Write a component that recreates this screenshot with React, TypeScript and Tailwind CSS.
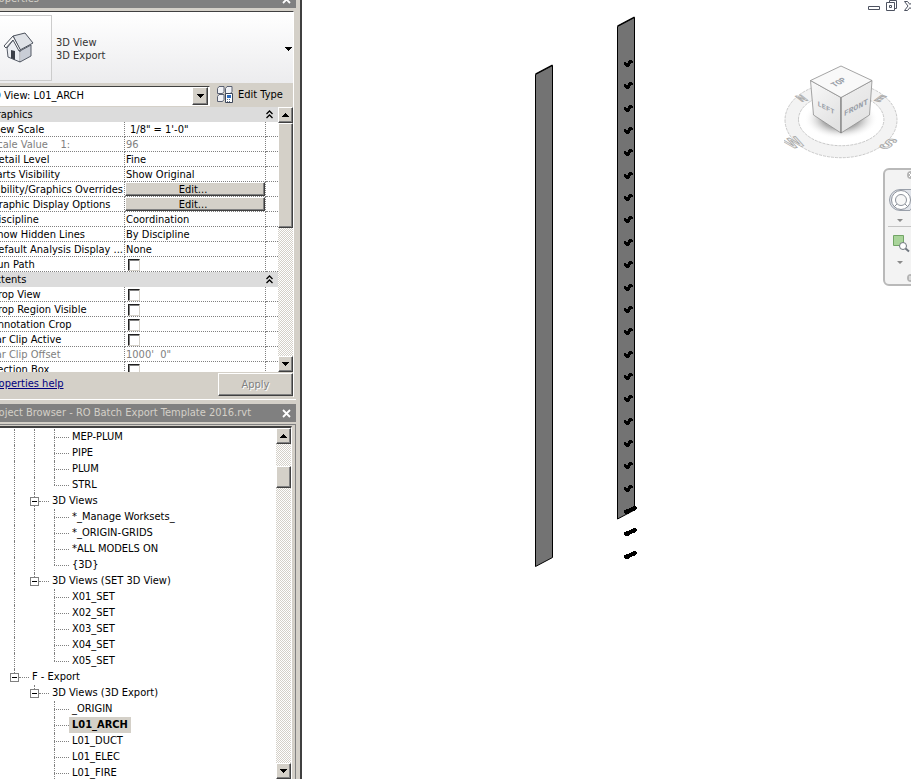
import { useState } from "react";
import type { ReactNode } from "react";

interface PropertyRow {
  name: string;
  kind: "text" | "button" | "check";
  value?: string;
  disabled?: boolean;
  indent?: boolean;
  long?: boolean;
}

interface PropertyGroup {
  title: string;
  rows: PropertyRow[];
}

const propertyGroups: PropertyGroup[] = [
  {
    title: "Graphics",
    rows: [
      { name: "View Scale", kind: "text", value: "1/8\" = 1'-0\"", indent: true },
      { name: "Scale Value    1:", kind: "text", value: "96", disabled: true },
      { name: "Detail Level", kind: "text", value: "Fine" },
      { name: "Parts Visibility", kind: "text", value: "Show Original" },
      { name: "Visibility/Graphics Overrides", kind: "button", value: "Edit...", long: true },
      { name: "Graphic Display Options", kind: "button", value: "Edit..." },
      { name: "Discipline", kind: "text", value: "Coordination" },
      { name: "Show Hidden Lines", kind: "text", value: "By Discipline" },
      { name: "Default Analysis Display ...", kind: "text", value: "None", long: true },
      { name: "Sun Path", kind: "check" },
    ],
  },
  {
    title: "Extents",
    rows: [
      { name: "Crop View", kind: "check" },
      { name: "Crop Region Visible", kind: "check" },
      { name: "Annotation Crop", kind: "check" },
      { name: "Far Clip Active", kind: "check" },
      { name: "Far Clip Offset", kind: "text", value: "1000'  0\"", disabled: true },
      { name: "Section Box", kind: "check" },
    ],
  },
];

// guides: whether each ancestor column still has a line running through it
interface TreeNode {
  label: string;
  guides: boolean[];
  expandable?: boolean;
  last?: boolean;
}

const treeNodes: TreeNode[] = [
  { label: "MEP-PLUM", guides: [true, true] },
  { label: "PIPE", guides: [true, true] },
  { label: "PLUM", guides: [true, true] },
  { label: "STRL", guides: [true, true], last: true },
  { label: "3D Views", guides: [true], expandable: true },
  { label: "*_Manage Worksets_", guides: [true, true] },
  { label: "*_ORIGIN-GRIDS", guides: [true, true] },
  { label: "*ALL MODELS ON", guides: [true, true] },
  { label: "{3D}", guides: [true, true], last: true },
  { label: "3D Views (SET 3D View)", guides: [true], expandable: true, last: true },
  { label: "X01_SET", guides: [true, false] },
  { label: "X02_SET", guides: [true, false] },
  { label: "X03_SET", guides: [true, false] },
  { label: "X04_SET", guides: [true, false] },
  { label: "X05_SET", guides: [true, false], last: true },
  { label: "F - Export", guides: [], expandable: true, last: true },
  { label: "3D Views (3D Export)", guides: [false], expandable: true, last: true },
  { label: "_ORIGIN", guides: [false, false] },
  { label: "L01_ARCH", guides: [false, false] },
  { label: "L01_DUCT", guides: [false, false] },
  { label: "L01_ELEC", guides: [false, false] },
  { label: "L01_FIRE", guides: [false, false] },
];

const raised =
  "bg-[#d4d0c8] border border-t-white border-l-white border-r-[#404040] border-b-[#404040] shadow-[inset_-1px_-1px_#808080]";

function Arrow({ down }: { down?: boolean }) {
  return (
    <svg width="7" height="4" viewBox="0 0 7 4" shapeRendering="crispEdges">
      <path d={down ? "M0 0h7L3.5 4z" : "M0 4h7L3.5 0z"} fill="#000" />
    </svg>
  );
}

function ScrollBar({ label, children }: { label: string; children: ReactNode }) {
  return (
    <div
      aria-label={label}
      className="flex w-[15px] shrink-0 flex-col bg-[conic-gradient(#fff_25%,#d4d0c8_0_50%,#fff_0_75%,#d4d0c8_0)] bg-[length:2px_2px]"
    >
      <button aria-label="Scroll up" className={`${raised} flex h-4 shrink-0 items-center justify-center`}>
        <Arrow />
      </button>
      {children}
      <button aria-label="Scroll down" className={`${raised} mt-auto flex h-4 shrink-0 items-center justify-center`}>
        <Arrow down />
      </button>
    </div>
  );
}

function TitleBar({ title }: { title: string }) {
  return (
    <div className="flex h-[18px] shrink-0 items-center justify-between bg-[#808080] pr-1 pl-[9px] text-[#d4d0c8]">
      <h2>{title}</h2>
      <button aria-label={`Close ${title}`} className="flex size-3 items-center justify-center">
        <svg width="9" height="9" viewBox="0 0 9 9">
          <path d="M1 1l7 7M8 1L1 8" stroke="#fff" strokeWidth="1.8" />
        </svg>
      </button>
    </div>
  );
}

function HouseIcon() {
  return (
    <svg width="32" height="32" viewBox="0 0 32 32" strokeLinejoin="round">
      <path d="M4 16l7-9 6 12v11L5 25z" fill="#eceef2" stroke="#555b66" />
      <path d="M17 19l11-6v11l-11 6z" fill="#c9cdd6" stroke="#555b66" />
      <path d="M10 4l12-3 8 10-13 7z" fill="#dfe2e7" stroke="#4b515c" />
      <path d="M10 4L1 14l2 2 7-8 6 11 1.500-1z" fill="#fafafa" stroke="#4b515c" />
      <path d="M8 18l4 1v9l-4-2z" fill="#3b3f48" />
      <path d="M17 20v9" stroke="#fff" />
    </svg>
  );
}

function EditTypeIcon() {
  return (
    <svg width="17" height="17" viewBox="0 0 17 17" fill="#f1f2f6" stroke="#5a6172" strokeLinejoin="round">
      <path d="M.5 2.500l1.500-2h5v5l-1.500 2h-5zM8.500 2.500l1.500-2h5v5l-1.500 2h-5zM.5 10.500l1.500-2h5v5l-1.500 2h-5z" />
      <rect x="8.500" y="7.500" width="7" height="9" fill="#fff" stroke="#3d4658" />
      <path d="M10 9h4v3h-4z" fill="#2c6cc0" stroke="none" />
      <path d="M10 13.500h4M10 15.500h4" stroke="#5d6f8b" strokeDasharray="1 1" />
    </svg>
  );
}

function PropertyValue({ row }: { row: PropertyRow }) {
  switch (row.kind) {
    case "button":
      return (
        <button aria-label={`Edit ${row.name}`} className={`${raised} block h-[14px] w-full pr-1 leading-[14px]`}>
          {row.value}
        </button>
      );
    case "check":
      return (
        <input
          type="checkbox"
          aria-label={row.name}
          className="mt-px ml-[3px] block size-3 appearance-none border border-t-[#202020] border-r-[#d4d0c8] border-b-[#d4d0c8] border-l-[#202020] bg-white shadow-[inset_1px_1px_#808080] checked:bg-gray-500"
        />
      );
    default:
      return <div className={row.indent ? "pt-px pl-[5px]" : "pt-px pl-px"}>{row.value}</div>;
  }
}

function PropertyGrid() {
  return (
    <table className="w-full table-fixed border-separate border-spacing-0 bg-white leading-[13px]">
      <colgroup>
        <col className="w-[145px]" />
        <col />
        <col className="w-3" />
      </colgroup>
      {propertyGroups.map((group) => (
        <tbody key={group.title}>
          <tr className="h-[15px] bg-[#dcdcdc]">
            <th colSpan={2} scope="rowgroup" className="p-0 pl-[9px] text-left font-normal">
              {group.title}
            </th>
            <td className="p-0">
              <button aria-label={`Collapse ${group.title}`} className="flex h-[14px] items-center">
                <svg width="7" height="9" viewBox="0 0 7 9" fill="none" stroke="#000" strokeWidth="1.300">
                  <path d="M.5 4L3.500 1l3 3M.5 8L3.500 5l3 3" />
                </svg>
              </button>
            </td>
          </tr>
          {group.rows.map((row) => (
            <tr key={row.name} className={row.disabled ? "h-[15px] text-[#808080]" : "h-[15px]"}>
              <th
                scope="row"
                className="border-r border-b border-dotted border-[#808080] p-0 text-left font-normal whitespace-pre"
              >
                {/* long names are pushed against the divider so their end stays readable */}
                <div className={row.long ? "flex justify-end pt-px pr-px" : "pt-px pl-[11px]"}>{row.name}</div>
              </th>
              <td className="border-r border-b border-dotted border-[#808080] p-0 whitespace-pre">
                <PropertyValue row={row} />
              </td>
              <td className="border-b border-dotted border-[#808080] p-0" />
            </tr>
          ))}
        </tbody>
      ))}
    </table>
  );
}

function PropertiesPanel() {
  return (
    <section className="-mt-[10px] border-b border-white pb-[2px]">
      <TitleBar title="Properties" />
      <div className="mt-[3px] mr-[2px] border-t border-r border-t-[#404040] border-r-white">
        <button className="flex h-[71px] w-full items-center bg-linear-to-b from-white to-[#ececee] text-left">
          <span className="flex h-[66px] w-[72px] items-center border border-[#cccccc] bg-linear-to-b from-white to-[#f0f0f2] pl-[22px]">
            <HouseIcon />
          </span>
          <span className="flex-1 pt-[2px] pl-1 leading-[13px] text-[#333333]">
            3D View
            <br />
            3D Export
          </span>
          <span className="pt-[2px] pr-px">
            <Arrow down />
          </span>
        </button>
        <div className="flex h-[24px] items-start pt-[3px]">
          <div className="relative w-[230px] border-t border-r border-b border-t-[#404040] border-r-white border-b-white bg-white">
            <select
              aria-label="View"
              className="block h-[18px] w-full appearance-none rounded-none bg-white pl-[7px] outline-none"
            >
              <option>3D View: L01_ARCH</option>
            </select>
            <span
              className={`${raised} pointer-events-none absolute top-0 right-px flex h-[18px] w-4 items-center justify-center`}
            >
              <Arrow down />
            </span>
          </div>
          <button className="ml-[7px] flex items-center gap-1">
            <EditTypeIcon />
            Edit Type
          </button>
        </div>
        <div className="flex h-[265px]">
          <div className="min-w-0 flex-1 overflow-hidden">
            <PropertyGrid />
          </div>
          <ScrollBar label="Properties scroll bar">
            <div className={`${raised} h-[105px]`} />
          </ScrollBar>
        </div>
        <div className="flex h-[25px] items-start justify-between pt-px pl-[9px]">
          <a href="#help" className="pt-1 text-[#000080] underline">
            Properties help
          </a>
          <button
            disabled
            className={`${raised} h-[23px] w-[75px] text-[#808080] [text-shadow:1px_1px_#fff]`}
          >
            Apply
          </button>
        </div>
      </div>
    </section>
  );
}

function TreeRow({ node, selected, onSelect }: { node: TreeNode; selected: boolean; onSelect: () => void }) {
  return (
    <li className="flex h-4">
      {node.guides.map((open, i) => (
        <span key={i} className="w-5 shrink-0 pl-[10px]">
          {open && <span className="block h-4 border-l border-dotted border-[#808080]" />}
        </span>
      ))}
      {node.expandable ? (
        <span className="flex w-[25px] shrink-0 pl-[6px]">
          <span className="flex w-[9px] flex-col">
            <span className="ml-1 h-1 border-l border-dotted border-[#808080]" />
            <button
              aria-label={`Collapse ${node.label}`}
              className="flex size-[9px] items-center justify-center border border-[#808080] bg-white"
            >
              <span className="h-px w-[5px] bg-black" />
            </button>
            {!node.last && <span className="ml-1 h-[3px] border-l border-dotted border-[#808080]" />}
          </span>
          <span className="mt-2 h-px w-[10px] border-t border-dotted border-[#808080]" />
        </span>
      ) : (
        <span className="w-[25px] shrink-0 pl-[10px]">
          <span className="block h-2 border-l border-dotted border-[#808080]" />
          <span
            className={
              node.last
                ? "block h-2 border-t border-dotted border-[#808080]"
                : "block h-2 border-t border-l border-dotted border-[#808080]"
            }
          />
        </span>
      )}
      <button
        onClick={onSelect}
        className={selected ? "bg-[#d4d0c8] px-[3px] leading-4 font-bold" : "px-[3px] leading-4"}
      >
        {node.label}
      </button>
    </li>
  );
}

function ProjectBrowser() {
  const [selected, setSelected] = useState("L01_ARCH");

  return (
    <section className="flex min-h-0 flex-1 flex-col pt-1">
      <TitleBar title="Project Browser - RO Batch Export Template 2016.rvt" />
      <div className="mt-[2px] flex min-h-0 flex-1 border-t border-r border-[#808080] pt-px pr-[3px]">
        <div className="flex min-h-0 flex-1 border-t-2 border-r border-t-[#404040] border-r-white bg-white">
          <ul className="min-w-0 flex-1 overflow-hidden pt-px pl-6">
            {treeNodes.map((node) => (
              <TreeRow
                key={node.label}
                node={node}
                selected={node.label === selected}
                onSelect={() => setSelected(node.label)}
              />
            ))}
          </ul>
          <ScrollBar label="Project browser scroll bar">
            <div className={`${raised} mt-[22px] h-[22px]`} />
          </ScrollBar>
        </div>
      </div>
    </section>
  );
}

// Levels are evenly stacked, the lowest three stick out past the slab
const levelMarks = Array.from({ length: 23 }, (_, i) => ({
  y: Math.round(63 + i * 22.35),
  wide: i >= 20,
}));

function ModelDrawing() {
  return (
    <svg width="340" height="600" viewBox="302 0 340 600" className="block">
      <g fill="#737373" stroke="#000">
        <path d="M535.500 74.500l17-9v492l-17 9z" />
        <path d="M617.500 26.500l17-9v492.500l-17 9z" />
      </g>
      <path d="M535.500 74l17-9M617.500 26l17-9" stroke="#000" strokeWidth="1.400" />
      <g fill="#000" shapeRendering="crispEdges">
        {levelMarks.map(({ y, wide }) => (
          <path
            key={y}
            d={
              wide
                ? `M624 ${y}h2v-1h3v-1h2v-1h2v-1h3v1h1v2h-1v1h-1v1h-3v1h-2v1h-1v1h-4v-1h-1z`
                : `M624 ${y - 1}h2v1h2v-2h1v-1h3v1h1v2h-2v1h-1v2h-1v1h-3v-1h-1v-1h-1z`
            }
          />
        ))}
      </g>
    </svg>
  );
}

function WindowControls() {
  return (
    <div className="absolute top-0 -right-[5px] flex h-3 items-center gap-[6px]">
      <button aria-label="Minimize">
        <svg width="12" height="12" viewBox="0 0 12 12">
          <path d="M.5 6.500h11v3H.5z" fill="#fff" stroke="#4d5260" />
        </svg>
      </button>
      <button aria-label="Restore">
        <svg width="12" height="12" viewBox="0 0 12 12" fill="#fff" stroke="#4d5260">
          <path d="M3.500.5h7v8h-7z" />
          <path d="M.5 2.500h8v8h-8z" />
          <path d="M3.500 5.500h2v2h-2z" />
        </svg>
      </button>
      <button aria-label="Close view">
        <svg width="12" height="12" viewBox="0 0 12 12">
          <path
            d="M.5 1.500h3L6 4.500l2.500-3h3L8 6l3.500 4.500h-3L6 7.500l-2.500 3h-3L4 6z"
            fill="#fff"
            stroke="#4d5260"
          />
        </svg>
      </button>
    </div>
  );
}

function ViewCube() {
  return (
    <svg
      width="114"
      height="98"
      viewBox="784 62 114 98"
      className="absolute top-[62px] right-[13px]"
      fontFamily="Liberation Sans, sans-serif"
      textAnchor="middle"
    >
      <defs>
        <radialGradient id="cubeShadow">
          <stop offset="0.500" stopColor="#8c8c8c" />
          <stop offset="1" stopColor="#fff" stopOpacity="0" />
        </radialGradient>
        <linearGradient id="faceLeft" x1="0" y1="0" x2="0.600" y2="1">
          <stop offset="0" stopColor="#f9f9f9" />
          <stop offset="1" stopColor="#e2e2e2" />
        </linearGradient>
        <linearGradient id="faceFront" x1="0" y1="0" x2="0.400" y2="1">
          <stop offset="0" stopColor="#efefef" />
          <stop offset="1" stopColor="#e2e2e2" />
        </linearGradient>
      </defs>
      <path
        d="M785 120a56 37.700 0 1 0 112 0a56 37.700 0 1 0-112 0zM798.500 119.500a42.700 26.200 0 1 1 85.400 0a42.700 26.200 0 1 1-85.400 0z"
        fill="#f3f3f3"
        fillRule="evenodd"
        stroke="#bcbcbc"
        strokeWidth="0.800"
        strokeDasharray="3 1"
      />
      <ellipse cx="841" cy="119" rx="37" ry="20" fill="url(#cubeShadow)" opacity="0.700" />
      <g fill="#ededed" stroke="#a6a6a6" strokeWidth="0.800" fontSize="16" fontWeight="bold">
        <text transform="translate(799 147) rotate(-14) skewX(38)">W</text>
        <text transform="translate(883 148) rotate(14) skewX(-38)">S</text>
        <text transform="translate(805 101) rotate(-14) skewX(38)" fontSize="10">
          N
        </text>
        <text transform="translate(877 101) rotate(14) skewX(-38)" fontSize="10">
          E
        </text>
      </g>
      <g stroke="#8e8e8e" strokeWidth="0.800" strokeLinejoin="round">
        <path d="M810.500 80.500l30.500 17v35.500l-27.500-18z" fill="url(#faceLeft)" />
        <path d="M841 97.500l31-17-2.500 34.500L841 133z" fill="url(#faceFront)" />
        <path d="M841 66l31 14.500-31 17-30.500-17z" fill="#f9f9f9" />
        <path d="M841 97.500V133" stroke="#747474" />
      </g>
      <g fill="#9a9fa8" fontFamily="Liberation Mono, monospace" fontWeight="bold">
        <text transform="translate(841 84) rotate(-28) skewX(28)" fontSize="8">
          TOP
        </text>
        <text transform="translate(826 110) skewY(28)" fontSize="7">
          LEFT
        </text>
        <text transform="translate(856 110) skewY(-28)" fontSize="8">
          FRONT
        </text>
      </g>
    </svg>
  );
}

function NavigationBar() {
  return (
    <div className="absolute top-[168px] -right-[14px] flex h-[118px] w-[42px] flex-col rounded-md border-2 border-[#b9b9b9] bg-[#f3f3f3]">
      <svg width="38" height="114" viewBox="885 170 38 114" fill="none">
        <circle cx="911" cy="175" r="4" fill="#b5b5b5" />
        <path d="M909 173l4 4M913 173l-4 4" stroke="#fff" />
        <path d="M900 189.500h14v15l-4 6h-10a10.500 10.500 0 0 1 0-21z" fill="#e1e4ea" stroke="#9aa0aa" />
        <circle cx="901" cy="200" r="9.500" fill="#fff" stroke="#8d929b" />
        <circle cx="901" cy="200" r="5.500" fill="#f7f7f7" stroke="#8d929b" />
        <path d="M894 207l3-3M905 204l3 3" stroke="#8d929b" />
        <path d="M897 219h6l-3 3zM897 261h6l-3 3z" fill="#8a8a8a" />
        <path d="M888 226.500h26" stroke="#c4c4c4" />
        <path d="M893.500 235.500h10v10h-10z" fill="#a9d49a" stroke="#72a566" />
        <circle cx="903" cy="246" r="3.500" fill="#fff" stroke="#70777f" />
        <path d="M905.500 248.500l3.500 3" stroke="#70777f" strokeWidth="2" />
        <circle cx="911" cy="278" r="4" fill="#b5b5b5" />
        <path d="M909 277h4M909 279h4" stroke="#fff" />
      </svg>
    </div>
  );
}

export default function App() {
  return (
    <div className="flex h-screen overflow-hidden bg-white font-['DejaVu_Sans_Condensed','DejaVu_Sans',sans-serif] text-[11px] leading-[14px] text-black">
      {/* Docked palettes run past the left edge of the window */}
      <aside className="-ml-5 flex w-[322px] shrink-0 flex-col border-r-2 border-[#404040] bg-[#d4d0c8] pr-1">
        <PropertiesPanel />
        <ProjectBrowser />
      </aside>
      <main className="relative min-w-0 flex-1 overflow-hidden">
        <ModelDrawing />
        <WindowControls />
        <ViewCube />
        <NavigationBar />
      </main>
    </div>
  );
}
